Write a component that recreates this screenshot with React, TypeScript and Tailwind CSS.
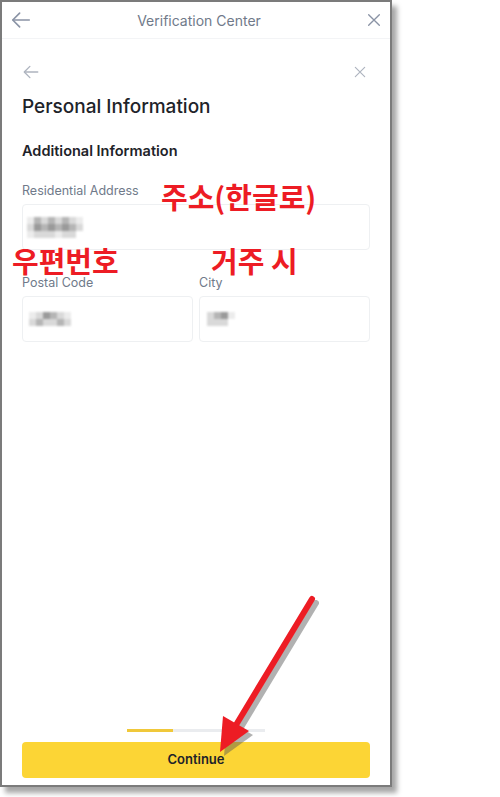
import React from "react";

function Blur({ cells }: { cells: string[][] }) {
  return (
    <div className="flex flex-col blur-[1.2px]">
      {cells.map((row, i) => (
        <div key={i} className="flex">
          {row.map((c, j) => (
            <div key={j} className="w-[7px] h-[7px]" style={{ background: c }} />
          ))}
        </div>
      ))}
    </div>
  );
}

const a = "#d9d9d9", b = "#b5b5b5", c = "#9a9a9a", d = "#ececec", w = "transparent";

function ArrowLeftIcon({ color, size }: { color: string; size: number }) {
  return (
    <svg width={size} height={size} viewBox="0 0 24 24" fill="none" stroke={color} strokeWidth={1.8} strokeLinecap="round" strokeLinejoin="round">
      <path d="M21 12H3.5" />
      <path d="M10.5 4.5L3 12l7.5 7.5" />
    </svg>
  );
}

function XIcon({ color, size }: { color: string; size: number }) {
  return (
    <svg width={size} height={size} viewBox="0 0 24 24" fill="none" stroke={color} strokeWidth={2} strokeLinecap="round">
      <path d="M4 4l16 16M20 4L4 20" />
    </svg>
  );
}

export default function App() {
  const font = { fontFamily: '"Inter", "Noto Sans", sans-serif' };
  const kr = { fontFamily: '"Noto Sans CJK KR", sans-serif' };
  return (
    <div className="w-[500px] h-[797px] bg-white relative overflow-hidden" style={font}>
      <div className="w-[392px] h-[787px] border-2 border-[#7b7b7b] bg-white flex flex-col shadow-[5px_6px_5px_rgba(0,0,0,0.35)] relative">
        {/* top header */}
        <div className="h-[37px] flex items-center justify-between px-[8px] border-b border-[#f3f4f6]">
          <ArrowLeftIcon color="#8a93a5" size={22} />
          <div className="text-[14px] text-[#707a8a]">Verification Center</div>
          <XIcon color="#8a93a5" size={16} />
        </div>
        <div className="flex-1 flex flex-col px-5">
          <div className="mt-[22px] h-[22px] flex items-center justify-between">
            <ArrowLeftIcon color="#aeb4bf" size={18} />
            <div className="mr-[3px]"><XIcon color="#aeb4bf" size={14} /></div>
          </div>
          <div className="mt-[10px] h-[28px] leading-[28px] text-[19px] font-medium text-[#1e2329]">Personal Information</div>
          <div className="mt-[19px] h-[22px] leading-[22px] text-[14.5px] font-semibold text-[#1e2329]">Additional Information</div>
          <div className="mt-[20px] h-[18px] leading-[18px] text-[12.5px] text-[#707a8a]">Residential Address</div>
          <div className="mt-[4px] h-[46px] rounded-[4px] border border-[#eef0f2] flex items-center pl-[4px]">
            <Blur cells={[[d, b, a, b, a, b, a, d], [a, c, b, c, b, c, b, a], [d, a, a, a, d, a, a, w]]} />
          </div>
          <div className="mt-[24px] grid grid-cols-2 gap-[6px]">
            <div className="flex flex-col">
              <div className="h-[18px] leading-[18px] text-[12.5px] text-[#707a8a]">Postal Code</div>
              <div className="mt-[4px] h-[46px] rounded-[4px] border border-[#eef0f2] flex items-center pl-[6px]">
                <Blur cells={[[d, a, c, b, a, d], [a, b, a, a, b, a]]} />
              </div>
            </div>
            <div className="flex flex-col">
              <div className="h-[18px] leading-[18px] text-[12.5px] text-[#707a8a]">City</div>
              <div className="mt-[4px] h-[46px] rounded-[4px] border border-[#eef0f2] flex items-center pl-[7px]">
                <Blur cells={[[a, b, c, d], [a, a, a, w]]} />
              </div>
            </div>
          </div>
          <div className="flex-1" />
          <div className="flex justify-center">
            <div className="w-[138px] h-[3px] bg-[#eaecef] flex">
              <div className="w-[46px] h-full bg-[#f0c83a]" />
            </div>
          </div>
          <div className="mt-[10px] mb-[7px] h-[36px] rounded-[4px] bg-[#fcd535] flex items-center justify-center text-[13px] font-semibold text-[#1e2329]">
            Continue
          </div>
        </div>
      </div>

      {/* red annotations */}
      <div className="absolute left-[161px] top-[178px] text-[29px] leading-[36px] font-semibold text-[#ed1c24]" style={kr}>
        주소(한글로)
      </div>
      <div className="absolute left-[12px] top-[242px] text-[29px] leading-[36px] font-semibold text-[#ed1c24]" style={kr}>
        우편번호
      </div>
      <div className="absolute left-[211px] top-[242px] text-[29px] leading-[36px] font-semibold text-[#ed1c24]" style={kr}>
        거주 시
      </div>

      {/* red arrow */}
      <svg className="absolute left-0 top-0" width={500} height={797} viewBox="0 0 500 797">
        <g transform="translate(4,4)" opacity={0.45}>
          <line x1={312} y1={599} x2={236} y2={725} stroke="#555" strokeWidth={6} strokeLinecap="round" />
          <polygon points="220,752 223,716 249,731" fill="#555" />
        </g>
        <line x1={312} y1={599} x2={236} y2={725} stroke="#ed1c24" strokeWidth={6} strokeLinecap="round" />
        <polygon points="220,752 223,716 249,731" fill="#ed1c24" />
      </svg>
    </div>
  );
}
